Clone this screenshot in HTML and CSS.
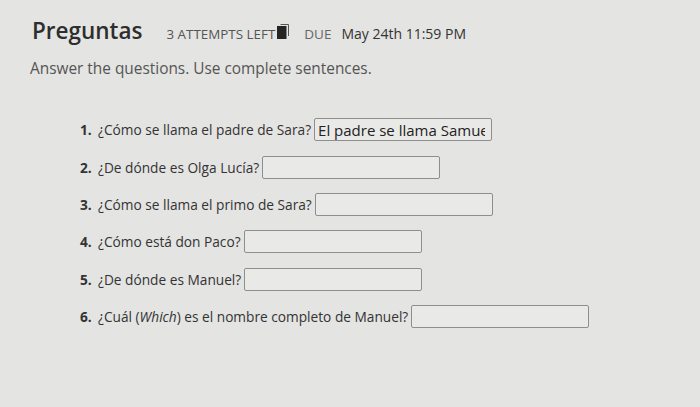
FILE: index.html
```html
<!DOCTYPE html>
<html>
    <head>
        <title>Preguntas</title>
        <link rel="stylesheet" href="styles.css">
    </head>
    <body>
        <div class="page">
            <div class="header">
                <h1>Preguntas</h1>
                <span class="attempts">3 ATTEMPTS LEFT</span>
                <svg class="book" width="12" height="15" viewBox="0 0 12 15">
                    <path d="M3.5 0.5 H11.5 V12" fill="none" stroke="#555" stroke-width="1"/>
                    <rect x="0" y="2" width="9.5" height="13" fill="#242424"/>
                </svg>
                <span class="due">DUE</span>
                <span class="date">May 24th 11:59 PM</span>
            </div>
            <p class="instructions">Answer the questions. Use complete sentences.</p>

            <ol class="questions">
                <li><span class="num">1.</span> ¿Cómo se llama el padre de Sara? <input type="text" value="El padre se llama Samuel"></li>
                <li><span class="num">2.</span> ¿De dónde es Olga Lucía? <input type="text"></li>
                <li><span class="num">3.</span> ¿Cómo se llama el primo de Sara? <input type="text"></li>
                <li><span class="num">4.</span> ¿Cómo está don Paco? <input type="text"></li>
                <li><span class="num">5.</span> ¿De dónde es Manuel? <input type="text"></li>
                <li><span class="num">6.</span> ¿Cuál (<em>Which</em>) es el nombre completo de Manuel? <input type="text"></li>
            </ol>
        </div>
    </body>
</html>
```

FILE: styles.css
```css
body { margin: 0; background: #e4e4e2; font-family: "Open Sans", sans-serif; color: #3a3a3a; }
.page { padding: 15px 30px; }
.header { display: flex; align-items: baseline; padding-left: 2px; }
h1 { margin: 0; font-size: 22.5px; font-weight: 600; color: #2e2e2e; }
.attempts { margin-left: 24px; font-size: 13.4px; color: #555; letter-spacing: 0; }
.book { margin-left: 2px; align-self: center; margin-top: 2px; }
.due { margin-left: 15px; font-size: 13.5px; color: #666; }
.date { margin-left: 10px; font-size: 14px; color: #333; }
.instructions { margin: 12px 0 0; font-size: 15.4px; color: #555; }
.questions { list-style: none; margin: 32px 0 0; padding: 0 0 0 50px; font-size: 13.7px; color: #333; }
.questions li { height: 37.4px; display: flex; align-items: center; }
.num { font-weight: 700; width: 18px; margin-right: 0; }
input { width: 178px; height: 23px; box-sizing: border-box; margin-left: 3px; border: 1px solid #8e8e8e; border-radius: 2px; background: #e9e9e7; font-family: "Open Sans", sans-serif; font-size: 15px; color: #222; padding: 0 6px 0 3px; }
```
